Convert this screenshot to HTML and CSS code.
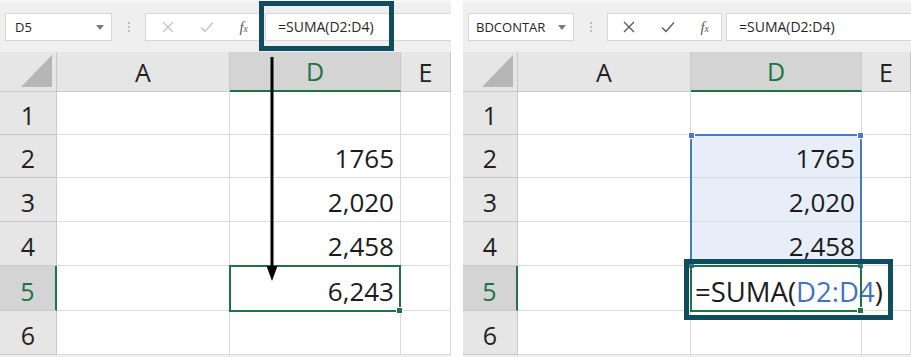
FILE: index.html
```html
<!DOCTYPE html>
<html lang="es">
    <head>
        <title>SUMA</title>
        <meta charset="utf-8" />
        <link rel="stylesheet" href="styles.css">
    </head>
    <body>
        <div class="page">
            <section class="pane pane-left">
                <div class="bar">
                    <div class="namebox">
                        <span>D5</span>
                        <svg class="caret" width="8" height="5" viewBox="0 0 8 5"><path d="M0 0h8L4 5z" /></svg>
                    </div>
                    <div class="grip"><i></i><i></i><i></i></div>
                    <div class="fxbox off">
                        <svg class="ico" width="12" height="12" viewBox="0 0 12 12"><path d="M1 1l10 10M11 1L1 11" /></svg>
                        <svg class="ico" width="14" height="12" viewBox="0 0 14 12"><path d="M1 6.5l4 4L13 1.5" /></svg>
                        <span class="fx">f<small>x</small></span>
                    </div>
                    <div class="formula">=SUMA(D2:D4)</div>
                </div>
                <div class="sheet">
                    <div class="hd corner"></div>
                    <div class="hd col">A</div>
                    <div class="hd col sel">D</div>
                    <div class="hd col">E</div>

                    <div class="hd row">1</div>
                    <div class="cell"></div>
                    <div class="cell"></div>
                    <div class="cell"></div>

                    <div class="hd row">2</div>
                    <div class="cell"></div>
                    <div class="cell">1765</div>
                    <div class="cell"></div>

                    <div class="hd row">3</div>
                    <div class="cell"></div>
                    <div class="cell">2,020</div>
                    <div class="cell"></div>

                    <div class="hd row">4</div>
                    <div class="cell"></div>
                    <div class="cell">2,458</div>
                    <div class="cell"></div>

                    <div class="hd row sel">5</div>
                    <div class="cell"></div>
                    <div class="cell">6,243</div>
                    <div class="cell"></div>

                    <div class="hd row">6</div>
                    <div class="cell"></div>
                    <div class="cell"></div>
                    <div class="cell"></div>

                    <div class="active"><b class="knob"></b></div>
                </div>
                <div class="callout callout-bar"></div>
                <svg class="arrow" width="14" height="226" viewBox="0 0 14 226">
                    <path d="M7 0v212" />
                    <path class="head" d="M1.5 209h11L7 224z" />
                </svg>
            </section>

            <section class="pane pane-right">
                <div class="bar">
                    <div class="namebox">
                        <span>BDCONTAR</span>
                        <svg class="caret" width="8" height="5" viewBox="0 0 8 5"><path d="M0 0h8L4 5z" /></svg>
                    </div>
                    <div class="grip"><i></i><i></i><i></i></div>
                    <div class="fxbox">
                        <svg class="ico" width="12" height="12" viewBox="0 0 12 12"><path d="M1 1l10 10M11 1L1 11" /></svg>
                        <svg class="ico" width="14" height="12" viewBox="0 0 14 12"><path d="M1 6.5l4 4L13 1.5" /></svg>
                        <span class="fx">f<small>x</small></span>
                    </div>
                    <div class="formula">=SUMA(D2:D4)</div>
                </div>
                <div class="sheet">
                    <div class="hd corner"></div>
                    <div class="hd col">A</div>
                    <div class="hd col sel">D</div>
                    <div class="hd col">E</div>

                    <div class="hd row">1</div>
                    <div class="cell"></div>
                    <div class="cell"></div>
                    <div class="cell"></div>

                    <div class="hd row">2</div>
                    <div class="cell"></div>
                    <div class="cell ref">1765</div>
                    <div class="cell"></div>

                    <div class="hd row">3</div>
                    <div class="cell"></div>
                    <div class="cell ref">2,020</div>
                    <div class="cell"></div>

                    <div class="hd row">4</div>
                    <div class="cell"></div>
                    <div class="cell ref">2,458</div>
                    <div class="cell"></div>

                    <div class="hd row sel">5</div>
                    <div class="cell"></div>
                    <div class="cell edit">=SUMA(<span class="blue">D2:D4</span>)<span class="cursor"></span></div>
                    <div class="cell"></div>

                    <div class="hd row">6</div>
                    <div class="cell"></div>
                    <div class="cell"></div>
                    <div class="cell"></div>

                    <div class="range">
                        <b class="knob tl"></b><b class="knob tr"></b>
                        <b class="knob bl"></b><b class="knob br"></b>
                    </div>
                    <div class="active"><b class="knob"></b></div>
                    <div class="callout callout-cell"></div>
                </div>
            </section>
        </div>
    </body>
</html>
```

FILE: styles.css
```css
html, body {
    margin: 0px;
    padding: 0px;
    background: white;
    font-family: "Open Sans", "Noto Sans", sans-serif;
    color: #1b1b1b;
}
.page {
    display: flex;
    gap: 12px;
    width: 911px;
    height: 357px;
    overflow: hidden;
}
.pane {
    position: relative;
    background: #efefef;
}
.pane-left {
    width: 451px;
}
.pane-right {
    width: 448px;
}

/* formula bar */
.bar {
    display: flex;
    align-items: flex-start;
    height: 52px;
    padding: 11px 0px 0px 5px;
    box-sizing: border-box;
    border-top: 2px solid #f8f8f8;
}
.bar > div {
    height: 28px;
    box-sizing: border-box;
}
.namebox {
    display: flex;
    align-items: center;
    justify-content: space-between;
    width: 107px;
    padding: 0px 7px 0px 9px;
    background: white;
    border: 1px solid #d6d6d6;
    font-size: 13px;
    color: #262626;
}
.pane-right .namebox {
    width: 106px;
    padding-left: 7px;
}
.caret path {
    fill: #7a7a7a;
}
.grip {
    display: flex;
    flex-direction: column;
    align-items: center;
    justify-content: center;
    gap: 2px;
    width: 33px;
}
.grip i {
    display: block;
    width: 2px;
    height: 2px;
    background: #bdbdbd;
}
.fxbox {
    display: flex;
    align-items: center;
    justify-content: space-between;
    width: 116px;
    padding: 0px 12px 0px 16px;
    background: white;
    border: 1px solid #d6d6d6;
}
.pane-right .fxbox {
    width: 115px;
    padding-left: 15px;
}
.ico path {
    fill: none;
    stroke: #5a5a5a;
    stroke-width: 1.4;
}
.off .ico path {
    stroke: #c4c4c4;
}
.fx {
    font-family: "Liberation Serif", serif;
    font-style: italic;
    font-size: 15px;
    color: #5a5a5a;
    line-height: 1;
}
.fx small {
    font-size: 10px;
}
.formula {
    flex: 1;
    margin-left: 4px;
    padding-left: 12px;
    background: white;
    border: 1px solid #d6d6d6;
    border-right: none;
    font-size: 14px;
    line-height: 26px;
    color: #262626;
}

/* sheet */
.sheet {
    position: relative;
    display: grid;
    grid-template-rows: 40px 43px 43px 44px 44px 45px 44px;
}
.pane-left .sheet {
    grid-template-columns: 57px 173px 171px 50px;
}
.pane-right .sheet {
    grid-template-columns: 55px 173px 171px 49px;
}
.cell, .hd {
    display: flex;
    align-items: flex-end;
    box-sizing: border-box;
    line-height: 27px;
}
.cell {
    justify-content: flex-end;
    padding: 0px 6px 5px 0px;
    background: white;
    border-right: 1px solid #dadada;
    border-bottom: 1px solid #dadada;
    font-size: 26px;
    white-space: nowrap;
}
.hd {
    justify-content: center;
    padding-bottom: 5px;
    background: #e6e6e6;
    border-right: 1px solid #c9c9c9;
    border-bottom: 1px solid #c9c9c9;
    font-size: 25px;
    color: #222;
}
.hd.sel {
    background: #d4d4d4;
    color: #217346;
}
.col.sel {
    border-bottom: 2px solid #217346;
}
.row.sel {
    border-right: 2px solid #217346;
}
.corner {
    position: relative;
}
.corner::before {
    content: "";
    position: absolute;
    right: 4px;
    bottom: 4px;
    width: 31px;
    height: 32px;
    background: #b6b6b6;
    clip-path: polygon(100% 0, 100% 100%, 0 100%);
}
.cell.ref {
    background: #e7eef9;
}
.cell.edit {
    position: relative;
    z-index: 1;
    justify-content: flex-start;
    padding-left: 4px;
    font-size: 27.5px;
}
.blue {
    color: #3f72c3;
}
.cursor {
    align-self: center;
    width: 1px;
    height: 32px;
    margin: 6px 0px 0px 2px;
    background: #111;
}

/* selections and callouts */
.active, .range {
    position: absolute;
    inset: -1px 0px -1px -1px;
    box-sizing: border-box;
}
.active {
    grid-column: 3 / 4;
    grid-row: 6 / 7;
    border: 2px solid #217346;
    z-index: 2;
}
.range {
    grid-column: 3 / 4;
    grid-row: 3 / 6;
    border: 2px solid #4a78c8;
    z-index: 2;
}
.knob {
    position: absolute;
    right: -4px;
    bottom: -4px;
    width: 5px;
    height: 5px;
    background: #217346;
    border: 1px solid white;
}
.range .knob {
    background: #4a78c8;
}
.knob.tl {
    left: -4px;
    top: -4px;
    right: auto;
    bottom: auto;
}
.knob.tr {
    top: -4px;
    bottom: auto;
}
.knob.bl {
    left: -4px;
    right: auto;
}
.callout {
    position: absolute;
    box-sizing: border-box;
    border: 5px solid #0f4d5e;
    z-index: 3;
}
.callout-bar {
    left: 259px;
    top: 1px;
    width: 135px;
    height: 50px;
}
.callout-cell {
    grid-column: 3 / 5;
    grid-row: 6 / 7;
    inset: -7px 18px -9px -7px;
}
.arrow {
    position: absolute;
    left: 265px;
    top: 57px;
    z-index: 3;
}
.arrow path {
    stroke: black;
    stroke-width: 3;
}
.arrow .head {
    stroke: none;
    fill: black;
}
```
